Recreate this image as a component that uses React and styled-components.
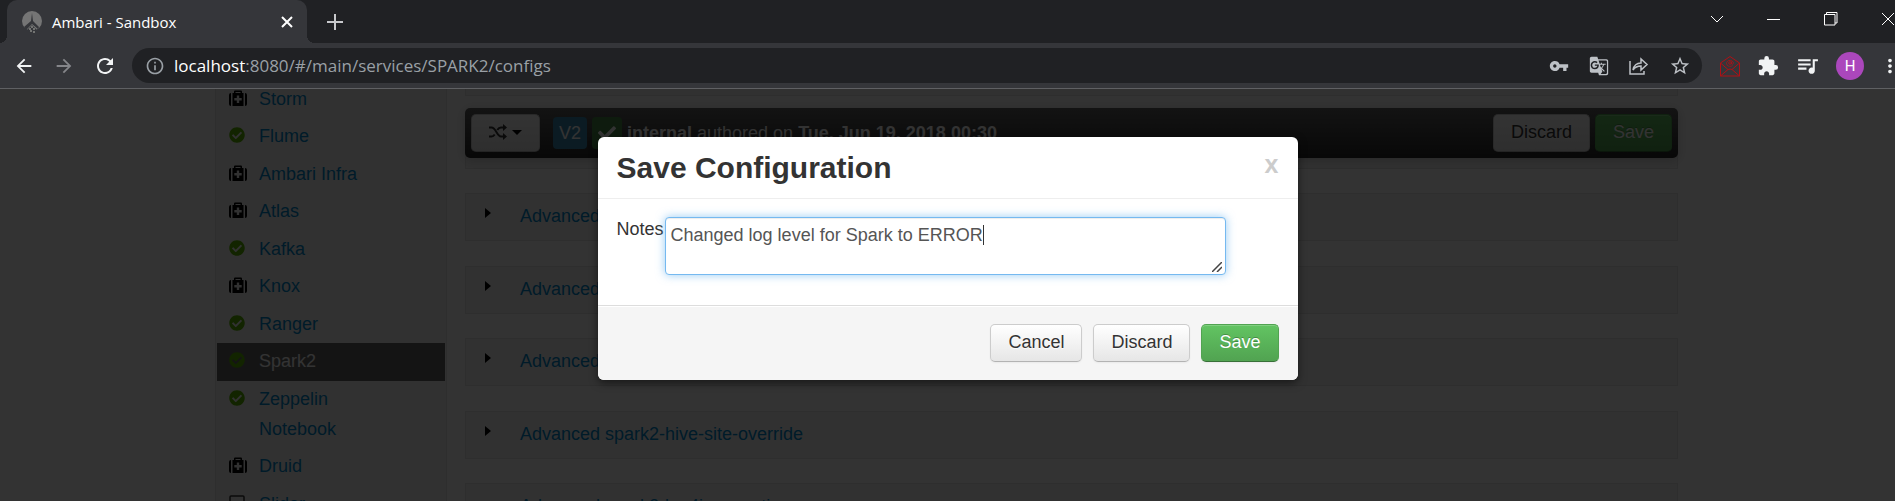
import React, { Component } from 'react';
import styled, { createGlobalStyle, css } from 'styled-components';
import { FaCheckCircle, FaCheck } from 'react-icons/fa';
import {
  MdArrowBack,
  MdArrowForward,
  MdRefresh,
  MdInfoOutline,
  MdVpnKey,
  MdGTranslate,
  MdStarBorder,
  MdExtension,
  MdQueueMusic,
  MdMoreVert,
} from 'react-icons/md';

const services = [
  { name: 'Storm', status: 'maintenance' },
  { name: 'Flume', status: 'ok' },
  { name: 'Ambari Infra', status: 'maintenance' },
  { name: 'Atlas', status: 'maintenance' },
  { name: 'Kafka', status: 'ok' },
  { name: 'Knox', status: 'maintenance' },
  { name: 'Ranger', status: 'ok' },
  { name: 'Spark2', status: 'ok', active: true },
  { name: 'Zeppelin Notebook', status: 'ok' },
  { name: 'Druid', status: 'maintenance' },
  { name: 'Slider', status: 'client' },
];

const sections = [
  { name: 'Advanced livy2-conf' },
  { name: 'Advanced livy2-env' },
  { name: 'Advanced spark2-defaults' },
  { name: 'Advanced spark2-env' },
  { name: 'Advanced spark2-hive-site' },
  { name: 'Advanced spark2-hive-site-override' },
  { name: 'Advanced spark2-log4j-properties', open: true },
];

class Browser extends Component {
  render() {
    return (
      <header>
        <TabStrip>
          <Tab>
            <AmbariIcon />
            <TabTitle>Ambari - Sandbox</TabTitle>
            <IconButton aria-label="Close tab">
              <svg width="18" height="18" viewBox="0 0 18 18" stroke="#fff" strokeWidth="2"><path d="M4 4l10 10M14 4L4 14" /></svg>
            </IconButton>
          </Tab>
          <NewTab aria-label="New tab">
            <svg width="16" height="16" viewBox="0 0 16 16" stroke="#c8c9cc" strokeWidth="2"><path d="M8 0v16M0 8h16" /></svg>
          </NewTab>
          <WindowButtons>
            <WindowButton aria-label="Search tabs">
              <svg width="14" height="14" viewBox="0 0 14 14"><path d="M1 4l6 6 6-6" /></svg>
            </WindowButton>
            <WindowButton aria-label="Minimize">
              <svg width="14" height="14" viewBox="0 0 14 14"><path d="M0 7.5h13" /></svg>
            </WindowButton>
            <WindowButton aria-label="Restore">
              <svg width="14" height="14" viewBox="0 0 14 14"><path d="M.5 2.500h10.500v10.500H.5zM2.500 2.500v-2H13v10.500h-2" /></svg>
            </WindowButton>
            <WindowButton aria-label="Close">
              <svg width="14" height="14" viewBox="0 0 14 14"><path d="M1 1l12 12M13 1L1 13" /></svg>
            </WindowButton>
          </WindowButtons>
        </TabStrip>
        <Toolbar>
          <NavButtons>
            <IconButton aria-label="Back" $size={22}><MdArrowBack /></IconButton>
            <IconButton aria-label="Forward" $size={22} $dim><MdArrowForward /></IconButton>
            <IconButton aria-label="Reload" $size={24}><MdRefresh /></IconButton>
          </NavButtons>
          <AddressBar>
            <MdInfoOutline size={20} color="#9aa0a6" />
            <Address><b>localhost</b>:8080/#/main/services/SPARK2/configs</Address>
            <AddressIcons>
              <MdVpnKey />
              <MdGTranslate />
              <ShareIcon />
              <MdStarBorder size={22} />
            </AddressIcons>
          </AddressBar>
          <Extensions>
            <MailIcon />
            <MdExtension />
            <MdQueueMusic size={25} />
            <Avatar>H</Avatar>
          </Extensions>
          <MenuButton aria-label="Menu" $size={22}><MdMoreVert /></MenuButton>
        </Toolbar>
      </header>
    );
  }
}

function AmbariIcon() {
  return (
    <svg width="20" height="24" viewBox="0 0 20 24">
      <ellipse cx="10" cy="11" rx="10" ry="10" fill="#757575" />
      <path d="M10 3l1 8 6 6-1 2-6-5-6 6-2-3 7-6z" fill="#35363a" />
      <path d="M5 20l5-5 5 5-3 3H8z" fill="#35363a" />
      <path d="M7 19h2m2 0h2m-5 2h2m1 1h2m-4-5h2" stroke="#b0b0a8" strokeWidth="1" />
    </svg>
  );
}

function ShareIcon() {
  return (
    <svg width="20" height="20" viewBox="0 0 20 20" fill="none" stroke="#bdc1c6" strokeWidth="1.500">
      <path d="M1 5v13h14v-3" />
      <path d="M4 14c1-5 4-7 8-7V3l6 5.500-6 5.500v-4c-4 0-6 1-8 4z" />
    </svg>
  );
}

function MailIcon() {
  return (
    <svg width="22" height="22" viewBox="0 0 22 22" fill="none" stroke="#b01015" strokeWidth="1">
      <path d="M1.500 8L11 1.500 20.500 8v13h-19zM1.500 8l7.500 6.500M20.500 8L13 14.500M1.500 21L9 14.500q2-1 4 0l7.500 6.500" />
      <path d="M13.500 10.500a3.500 3 0 1 1 1-2.500q-.5 2-2 1V6.500" strokeWidth=".8" />
      <circle cx="11" cy="8" r="1.300" strokeWidth=".8" />
    </svg>
  );
}

function MedkitIcon() {
  return (
    <svg width="18" height="16" viewBox="0 0 18 16" fill="#000">
      <path d="M0 5q0-2 2-2v13q-2 0-2-2zM18 5q0-2-2-2v13q2 0 2-2z" />
      <path fillRule="evenodd" d="M3.500 3H5V1.500Q5 .5 6 .5h6q1 0 1 1V3h1.500v13h-11zM6.500 3h5V2h-5zM7.800 5.500V8H5.300v2.500h2.500V13h2.400v-2.500h2.500V8h-2.500V5.500z" />
    </svg>
  );
}

function ShuffleIcon() {
  return (
    <svg width="18" height="16" viewBox="0 0 18 16" fill="none" stroke="#333" strokeWidth="2">
      <path d="M0 3.500h2.500C7 3.500 8 12.500 12 12.500h2M0 12.500h2.500q2 0 3.200-2M8.300 6q1.500-2.500 3.700-2.500h2" />
      <path d="M14 0l4 3.500L14 7zM14 9l4 3.500-4 3.500z" fill="#333" stroke="none" />
    </svg>
  );
}

function CaretDown() {
  return <svg width="10" height="5" viewBox="0 0 10 5" fill="#000"><path d="M0 0h10L5 5z" /></svg>;
}

function CaretRight() {
  return <svg width="6" height="10" viewBox="0 0 6 10" fill="#000"><path d="M0 0v10l6-5z" /></svg>;
}

function StatusIcon({ status }) {
  if (status === 'maintenance') {
    return <MedkitIcon />;
  }
  if (status === 'ok') {
    return <FaCheckCircle size={16} color="#5ab400" />;
  }
  return (
    <svg width="16" height="16" viewBox="0 0 16 16" fill="none" stroke="#333" strokeWidth="1.500">
      <rect x="1" y="1" width="14" height="10" rx="1" />
      <path d="M5 15h6" />
    </svg>
  );
}

class Services extends Component {
  render() {
    return (
      <Sidebar>
        {services.map((service) => (
          <Service key={service.name} $active={service.active}>
            <StatusCell><StatusIcon status={service.status} /></StatusCell>
            <ServiceLink href="#" $active={service.active}>{service.name}</ServiceLink>
          </Service>
        ))}
      </Sidebar>
    );
  }
}

class Configs extends Component {
  render() {
    return (
      <Content>
        {sections.map((section) => (
          <Section key={section.name}>
            <CaretCell>{section.open ? <CaretDown /> : <CaretRight />}</CaretCell>
            <a href="#">{section.name}</a>
          </Section>
        ))}
        <VersionBar>
          <Button aria-label="Compare versions">
            <ShuffleIcon />
            <CaretDown />
          </Button>
          <Version>
            <Label $color="#3a87ad">V2</Label>
            <Label $color="#468847"><FaCheck size={18} /></Label>
            <span><b>internal</b> authored on <b>Tue, Jun 19, 2018 00:30</b></span>
          </Version>
          <BarActions>
            <Button>Discard</Button>
            <Button $success>Save</Button>
          </BarActions>
        </VersionBar>
      </Content>
    );
  }
}

class SaveDialog extends Component {
  render() {
    return (
      <Dialog role="dialog" aria-labelledby="dialog-title">
        <DialogHeader>
          <h3 id="dialog-title">Save Configuration</h3>
          <CloseButton aria-label="Close">x</CloseButton>
        </DialogHeader>
        <DialogBody>
          <label htmlFor="notes">Notes</label>
          <NotesField>
            <Notes
              id="notes"
              spellCheck="false"
              defaultValue="Changed log level for Spark to ERROR"
            />
            <Grip width="10" height="10" viewBox="0 0 10 10"><path d="M0 10L10 0M5 10l5-5" /></Grip>
          </NotesField>
        </DialogBody>
        <DialogFooter>
          <Button>Cancel</Button>
          <Button>Discard</Button>
          <Button $success>Save</Button>
        </DialogFooter>
      </Dialog>
    );
  }
}

export default class App extends Component {
  render() {
    return (
      <Window>
        <GlobalStyle />
        <Browser />
        <Viewport>
          <Page>
            <Services />
            <Configs />
          </Page>
          <Backdrop>
            <SaveDialog />
          </Backdrop>
        </Viewport>
      </Window>
    );
  }
}

const GlobalStyle = createGlobalStyle`
*{
    box-sizing: border-box;
}
body{
    margin: 0;
    color: #333;
    font-family: "Liberation Sans", Arial, sans-serif;
    font-size: 18px;
    line-height: 25px;
}
a{
    color: #08c;
    text-decoration: none;
}
button{
    font: inherit;
    cursor: pointer;
}
svg{
    flex: none;
}
`;

const Window = styled.div`
display: flex;
flex-direction: column;
height: 100vh;
overflow: hidden;
`;

const TabStrip = styled.div`
display: flex;
height: 43px;
padding-left: 7px;
background: #202124;
`;

const Tab = styled.div`
position: relative;
display: flex;
align-items: center;
width: 300px;
padding: 0 11px 0 15px;
gap: 10px;
border-radius: 10px 10px 0 0;
background: #35363a;
color: #fff;
/* curved feet of the tab */
&::before,
&::after{
    content: "";
    position: absolute;
    bottom: 0;
    width: 8px;
    height: 8px;
}
&::before{
    right: 100%;
    background: radial-gradient(circle at 0 0, transparent 8px, #35363a 8px);
}
&::after{
    left: 100%;
    background: radial-gradient(circle at 100% 0, transparent 8px, #35363a 8px);
}
`;

const TabTitle = styled.span`
flex: 1;
font-family: "Open Sans", sans-serif;
font-size: 15px;
line-height: 22px;
`;

const IconButton = styled.button`
display: flex;
align-items: center;
justify-content: center;
padding: 0;
border: 0;
background: none;
color: ${(props) => (props.$dim ? '#85868a' : '#f1f3f4')};
font-size: ${(props) => props.$size || 18}px;
`;

const NewTab = styled(IconButton)`
margin-left: 20px;
`;

const WindowButtons = styled.div`
display: flex;
align-items: center;
gap: 43px;
margin: 0 0 6px auto;
`;

const WindowButton = styled.button`
display: flex;
padding: 0;
border: 0;
background: none;
svg{
    fill: none;
    stroke: #fff;
}
`;

const Toolbar = styled.div`
display: flex;
align-items: center;
height: 46px;
padding-left: 13px;
border-bottom: 1px solid #5f6063;
background: #35363a;
`;

const NavButtons = styled.div`
display: flex;
gap: 18px;
width: 119px;
`;

const AddressBar = styled.div`
display: flex;
flex: 1;
align-items: center;
height: 35px;
padding: 0 11px 0 13px;
gap: 9px;
border-radius: 18px;
background: #202124;
`;

const Address = styled.span`
flex: 1;
color: #9aa0a6;
font-family: "Open Sans", sans-serif;
font-size: 17px;
b{
    color: #fff;
    font-weight: 400;
}
`;

const AddressIcons = styled.div`
display: flex;
align-items: center;
gap: 20px;
color: #bdc1c6;
font-size: 20px;
`;

const Extensions = styled.div`
display: flex;
align-items: center;
gap: 16px;
margin-left: 17px;
color: #f1f3f4;
font-size: 22px;
`;

const Avatar = styled.span`
width: 28px;
height: 28px;
border-radius: 50%;
background: #ab47bc;
color: #fff;
font-family: Roboto, sans-serif;
font-size: 15px;
line-height: 28px;
text-align: center;
`;

const MenuButton = styled(IconButton)`
margin: 0 -6px 0 15px;
`;

const Viewport = styled.main`
position: relative;
flex: 1;
overflow: hidden;
background: #fff;
`;

/* scrolled a little way down, so the top of the list is cut off */
const Page = styled.div`
display: flex;
align-items: flex-start;
gap: 18px;
margin: -8px auto 0;
padding-right: 2px;
width: 1465px;
max-width: 100%;
`;

const Sidebar = styled.ul`
flex: none;
width: 232px;
margin: 0;
padding: 0 1px;
border: 1px solid #e3e3e3;
border-width: 0 1px;
background: #f5f5f5;
list-style: none;
`;

const Service = styled.li`
display: flex;
padding: 3px 60px 4px 12px;
background: ${(props) => (props.$active ? '#666' : 'none')};
&:nth-child(even){
    padding-bottom: 5px;
}
`;

const StatusCell = styled.span`
display: flex;
align-items: center;
width: 30px;
height: 28px;
`;

const ServiceLink = styled.a`
flex: 1;
line-height: 30px;
color: ${(props) => (props.$active ? '#fff' : '#08c')};
`;

const Content = styled.section`
position: relative;
flex: 1;
margin-top: -33px;
`;

const Section = styled.div`
display: flex;
height: 48px;
padding: 10px 19px;
margin-bottom: 25px;
border: 1px solid #e5e5e5;
background: #f5f5f5;
&:nth-child(even){
    margin-bottom: 24px;
}
`;

const CaretCell = styled.span`
display: flex;
align-items: center;
width: 35px;
height: 18px;
`;

const VersionBar = styled.div`
position: absolute;
top: 60px;
left: 0;
right: 0;
display: flex;
align-items: center;
padding: 6px;
border-radius: 5px;
background: linear-gradient(#606060, #282828);
box-shadow: 0 2px 12px rgba(0, 0, 0, .2);
color: #fff;
`;

const Version = styled.div`
display: flex;
align-items: center;
gap: 5px;
margin-left: 13px;
`;

const Label = styled.span`
display: flex;
align-items: center;
height: 32px;
padding: 0 6px;
border-radius: 4px;
background: ${(props) => props.$color};
color: #fff;
`;

const BarActions = styled.div`
display: flex;
gap: 5px;
margin-left: auto;
`;

const Button = styled.button`
display: inline-flex;
align-items: center;
justify-content: center;
gap: 5px;
height: 38px;
padding: 0 17px 2px;
border: 1px solid #ccc;
border-bottom-color: #b3b3b3;
border-radius: 5px;
background: linear-gradient(#fff, #e6e6e6);
box-shadow: inset 0 1px 0 rgba(255, 255, 255, .2), 0 1px 2px rgba(0, 0, 0, .05);
color: #333;
text-shadow: 0 1px 1px rgba(255, 255, 255, .75);
${(props) => props.$success && css`
    border-color: #51a351 #51a351 #387038;
    background: linear-gradient(#62c462, #51a351);
    color: #fff;
    text-shadow: 0 -1px 0 rgba(0, 0, 0, .25);
`}
`;

const Backdrop = styled.div`
position: absolute;
inset: 0;
display: flex;
align-items: flex-start;
justify-content: center;
padding-top: 48px;
background: rgba(0, 0, 0, .8);
`;

const Dialog = styled.div`
width: 700px;
border-radius: 6px;
overflow: hidden;
background: #fff;
box-shadow: 0 3px 9px rgba(0, 0, 0, .5);
`;

const DialogHeader = styled.div`
display: flex;
align-items: flex-start;
justify-content: space-between;
height: 62px;
padding: 12px 19px;
border-bottom: 1px solid #eee;
h3{
    margin: 0;
    font-size: 30px;
    line-height: 38px;
}
`;

const CloseButton = styled.button`
padding: 0;
border: 0;
background: none;
color: #ccc;
font-size: 25px;
font-weight: 700;
line-height: 30px;
`;

const DialogBody = styled.div`
display: flex;
gap: 1px;
height: 106px;
padding: 18px 72px 0 19px;
`;

const NotesField = styled.div`
position: relative;
display: flex;
flex: 1;
height: 58px;
`;

/* the gradient is the text cursor, at the end of the note */
const Notes = styled.textarea`
flex: 1;
padding: 5px;
border: 1px solid #75b9f0;
border-radius: 4px;
outline: 0;
background: #fff linear-gradient(#333, #333) no-repeat 317px 7px / 1px 20px;
box-shadow: inset 0 1px 1px rgba(0, 0, 0, .075), 0 0 10px rgba(82, 168, 236, .6);
color: #555;
font: inherit;
resize: none;
`;

const Grip = styled.svg`
position: absolute;
right: 4px;
bottom: 3px;
stroke: #444;
stroke-width: 1.5;
pointer-events: none;
`;

const DialogFooter = styled.div`
display: flex;
justify-content: flex-end;
gap: 11px;
padding: 18px 19px;
border-top: 1px solid #ddd;
background: #f5f5f5;
box-shadow: inset 0 1px 0 #fff;
`;
